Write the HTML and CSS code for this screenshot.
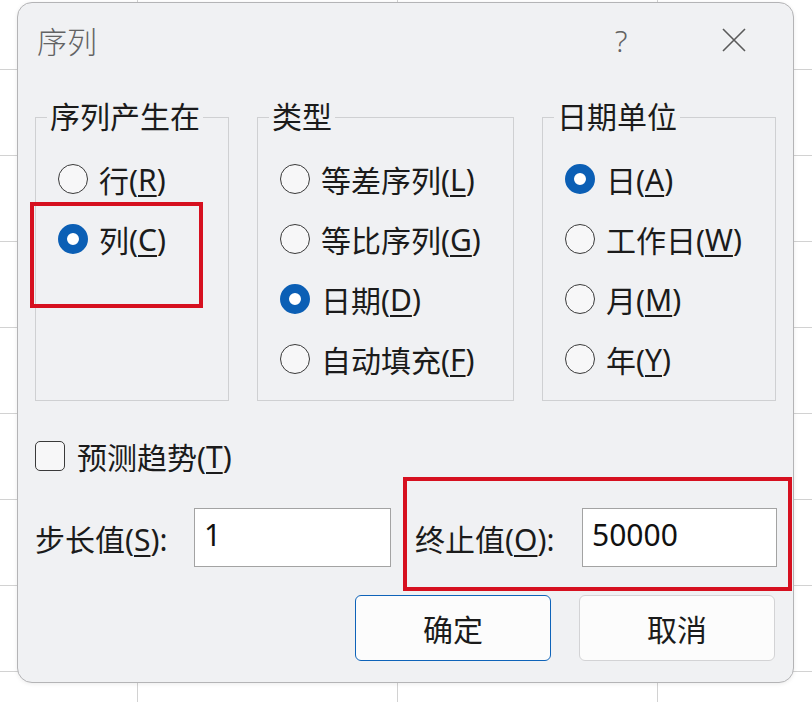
FILE: index.html
```html
<!DOCTYPE html>
<html>

	<head>
		<meta charset="UTF-8">
		<title>序列</title>
		<link rel="stylesheet" href="styles.css">
	</head>

	<body>
		<div class="dialog">
			<div class="titlebar">
				<span class="title">序列</span>
				<span class="help">?</span>
				<span class="close">
					<svg width="24" height="24" viewBox="0 0 24 24"><path d="M1 1L23 23M23 1L1 23" stroke="#5a5a5a" stroke-width="1.6" fill="none" /></svg>
				</span>
			</div>

			<div class="groups">
				<fieldset class="group g1">
					<legend>序列产生在</legend>
					<div class="opt"><span class="radio"></span>行(<u>R</u>)</div>
					<div class="opt"><span class="radio on"></span>列(<u>C</u>)</div>
				</fieldset>
				<fieldset class="group g2">
					<legend>类型</legend>
					<div class="opt"><span class="radio"></span>等差序列(<u>L</u>)</div>
					<div class="opt"><span class="radio"></span>等比序列(<u>G</u>)</div>
					<div class="opt"><span class="radio on"></span>日期(<u>D</u>)</div>
					<div class="opt"><span class="radio"></span>自动填充(<u>F</u>)</div>
				</fieldset>
				<fieldset class="group g3">
					<legend>日期单位</legend>
					<div class="opt"><span class="radio on"></span>日(<u>A</u>)</div>
					<div class="opt"><span class="radio"></span>工作日(<u>W</u>)</div>
					<div class="opt"><span class="radio"></span>月(<u>M</u>)</div>
					<div class="opt"><span class="radio"></span>年(<u>Y</u>)</div>
				</fieldset>
			</div>

			<div class="check-row"><span class="checkbox"></span>预测趋势(<u>T</u>)</div>

			<div class="input-row">
				<span class="lbl lbl1">步长值(<u>S</u>):</span>
				<span class="field f1">1</span>
				<span class="lbl lbl2">终止值(<u>O</u>):</span>
				<span class="field f2">50000</span>
			</div>

			<div class="btn-row">
				<span class="btn primary">确定</span>
				<span class="btn">取消</span>
			</div>

			<!-- 红框标注 -->
			<div class="mark mark1"></div>
			<div class="mark mark2"></div>
		</div>
	</body>

</html>
```

FILE: styles.css
```css
* {
	margin: 0;
	padding: 0;
	box-sizing: border-box;
}

html,
body {
	width: 812px;
	height: 702px;
	overflow: hidden;
}

body {
	font-family: "Noto Sans", "Noto Sans CJK SC", sans-serif;
	font-size: 30px;
	color: #1b1b1b;
	background-color: #fff;
	background-image: linear-gradient(to right, #d2d2d2 1px, transparent 1px), linear-gradient(to bottom, #d2d2d2 1px, transparent 1px);
	background-size: 260px 100%, 100% 86px;
	background-position: 137px 0, 0 69px;
	padding: 2px 0 0 17px;
}

u {
	text-decoration-thickness: 1.5px;
	text-underline-offset: 4px;
}

.dialog {
	position: relative;
	width: 777px;
	height: 681px;
	background: #f0f1f3;
	border: 1px solid #b4b4b6;
	border-radius: 15px;
	box-shadow: 0 1px 4px rgba(0, 0, 0, 0.08);
}

/* 标题栏 */
.titlebar {
	height: 74px;
	display: flex;
	align-items: center;
	padding-left: 19px;
	padding-right: 36px;
	color: #636363;
}

.title {
	flex: 1;
	font-size: 30px;
	font-weight: 300;
}

.help {
	width: 40px;
	text-align: center;
	font-size: 30px;
	font-weight: 300;
}

.close {
	width: 46px;
	margin-left: 70px;
	display: flex;
	justify-content: center;
}

/* 分组框 */
.groups {
	display: flex;
	gap: 28px;
	padding-left: 17px;
	margin-top: 22px;
}

.group {
	height: 302px;
	border: 1px solid #cfd0d2;
	padding: 14px 0 0 22px;
	min-width: 0;
}

.group legend {
	line-height: 36px;
	padding: 0 3px;
	margin-left: -11px;
}

.g1 {
	width: 194px;
}

.g2 {
	width: 257px;
}

.g3 {
	width: 234px;
}

.opt {
	height: 60px;
	display: flex;
	align-items: center;
	white-space: nowrap;
}

.radio {
	width: 30px;
	height: 30px;
	border: 1.5px solid #3a3a3a;
	border-radius: 50%;
	margin-right: 11px;
	flex-shrink: 0;
	background: #f7f7f8;
}

.radio.on {
	border: 9px solid #0b5fb5;
	background: #fff;
}

/* 复选框 */
.check-row {
	display: flex;
	align-items: center;
	height: 30px;
	margin-top: 40px;
	padding-left: 17px;
}

.checkbox {
	width: 30px;
	height: 30px;
	border: 1.5px solid #3a3a3a;
	border-radius: 5px;
	margin-right: 12px;
	background: #f7f7f8;
}

/* 输入行 */
.input-row {
	display: flex;
	align-items: center;
	height: 59px;
	margin-top: 37px;
	padding-left: 17px;
}

.lbl {
	white-space: nowrap;
}

.lbl1 {
	width: 159px;
}

.lbl2 {
	width: 167px;
	margin-left: 24px;
}

.field {
	height: 59px;
	background: #fff;
	border: 1px solid #a3a3a3;
	font-size: 30px;
	line-height: 52px;
	padding-left: 9px;
	color: #111;
}

.f1 {
	width: 197px;
}

.f2 {
	width: 195px;
}

/* 按钮 */
.btn-row {
	display: flex;
	justify-content: flex-end;
	gap: 28px;
	margin-top: 28px;
	padding-right: 18px;
}

.btn {
	width: 196px;
	height: 66px;
	display: flex;
	align-items: center;
	justify-content: center;
	background: #fcfcfc;
	border: 1px solid #d3d3d5;
	border-radius: 6px;
}

.btn.primary {
	border: 1.5px solid #0e63b9;
}

/* 标注红框 */
.mark {
	position: absolute;
	border: 4px solid #d6101f;
}

.mark1 {
	left: 12px;
	top: 199px;
	width: 173px;
	height: 106px;
}

.mark2 {
	left: 385px;
	top: 474px;
	width: 389px;
	height: 114px;
}
```
